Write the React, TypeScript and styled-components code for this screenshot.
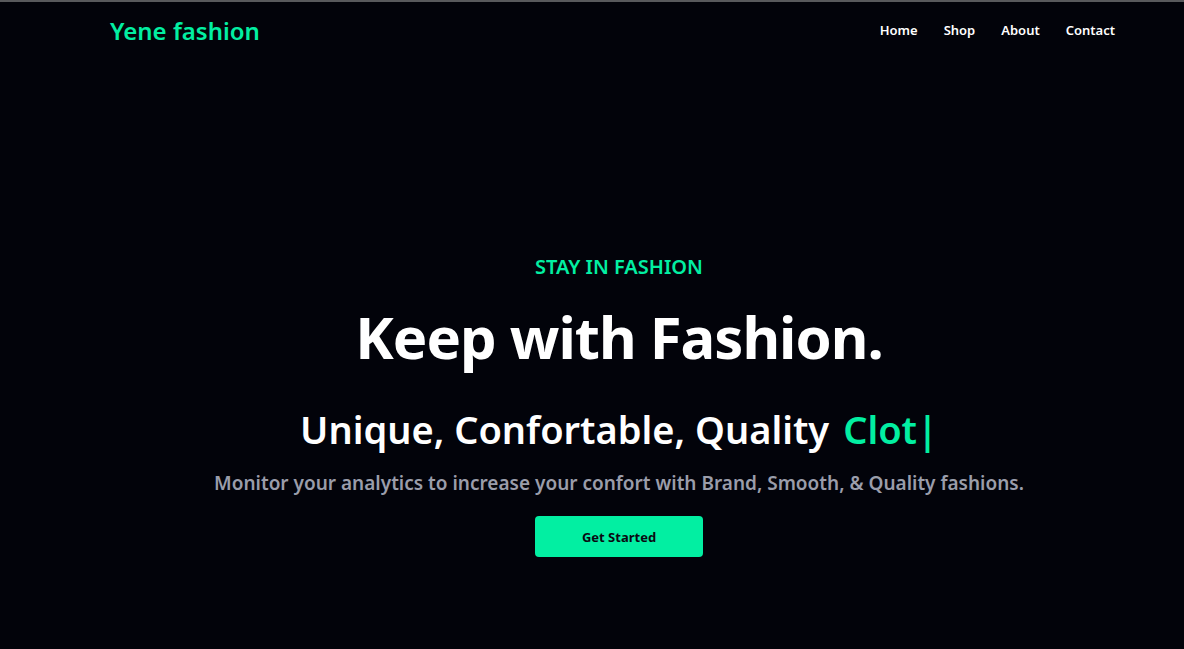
import React from "react";
import styled, { createGlobalStyle } from "styled-components";

const GlobalStyle = createGlobalStyle`
  html, body { margin: 0; padding: 0; background: #02030a; }
  body { font-family: "Noto Sans", "Open Sans", sans-serif; color: #ffffff; }
  * { box-sizing: border-box; }
`;

const Page = styled.div`
  min-height: 649px;
  background: #02030a;
  border-top: 2px solid #58595c;
  display: flex;
  flex-direction: column;
`;

const Header = styled.header`
  display: flex;
  align-items: center;
  justify-content: space-between;
  height: 56px;
  padding: 0 69px 0 110px;
`;

const Logo = styled.div`
  color: #02efa2;
  font-size: 24px;
  font-weight: 600;
`;

const Nav = styled.nav`
  display: flex;
  gap: 26px;
  margin-top: -1px;
`;

const NavLink = styled.a`
  color: #ffffff;
  font-size: 13px;
  font-weight: 600;
  text-decoration: none;
`;

const Hero = styled.main`
  display: flex;
  flex-direction: column;
  align-items: center;
  padding: 196px 0 0 54px;
`;

const Eyebrow = styled.div`
  color: #02efa2;
  font-size: 20px;
  font-weight: 600;
  line-height: 26px;
`;

const Title = styled.h1`
  margin: 20px 0 0;
  font-size: 58px;
  font-weight: 700;
  letter-spacing: -1px;
  line-height: 74px;
`;

const Subtitle = styled.h2`
  margin: 32px 0 0;
  font-size: 38px;
  font-weight: 600;
  line-height: 46px;
`;

const Typed = styled.span`
  color: #02efa2;
  margin-left: 14px;
`;

const Lead = styled.p`
  margin: 18px 0 0;
  color: #9a9daa;
  font-size: 19px;
  font-weight: 600;
  line-height: 26px;
`;

const Button = styled.button`
  margin-top: 20px;
  width: 168px;
  height: 41px;
  border: none;
  border-radius: 4px;
  background: #02efa2;
  color: #0a0a12;
  font-family: inherit;
  font-size: 13px;
  font-weight: 700;
  cursor: pointer;
`;

export default function App() {
  return (
    <Page>
      <GlobalStyle />
      <Header>
        <Logo>Yene fashion</Logo>
        <Nav>
          <NavLink href="#">Home</NavLink>
          <NavLink href="#">Shop</NavLink>
          <NavLink href="#">About</NavLink>
          <NavLink href="#">Contact</NavLink>
        </Nav>
      </Header>
      <Hero>
        <Eyebrow>STAY IN FASHION</Eyebrow>
        <Title>Keep with Fashion.</Title>
        <Subtitle>
          Unique, Confortable, Quality<Typed>Clot|</Typed>
        </Subtitle>
        <Lead>
          Monitor your analytics to increase your confort with Brand, Smooth, &amp; Quality fashions.
        </Lead>
        <Button>Get Started</Button>
      </Hero>
    </Page>
  );
}
